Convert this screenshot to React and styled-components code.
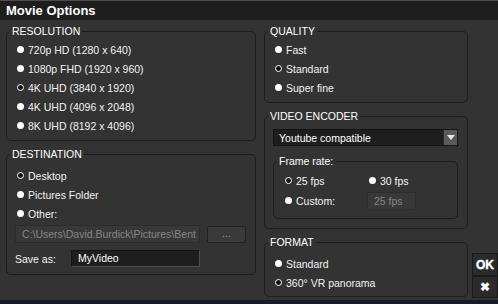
import React from "react";
import styled, { createGlobalStyle, css } from "styled-components";

const GlobalStyle = createGlobalStyle`
  html, body { margin: 0; padding: 0; background: #333333; }
  * { box-sizing: border-box; }
  body {
    font-family: "Liberation Sans", Arial, sans-serif;
    font-size: 10.5px;
    color: #f2f2f2;
  }
`;

const Window = styled.div`
  width: 498px;
  height: 304px;
  background: #333333;
  display: flex;
  flex-direction: column;
  overflow: hidden;
`;

const TitleBar = styled.div`
  height: 20px;
  flex: none;
  background: #1e1e1e;
  border-top: 1px solid #4d4d4d;
  padding-left: 6px;
  font-size: 13px;
  font-weight: bold;
  line-height: 19px;
  color: #ffffff;
`;

const Body = styled.div`
  flex: 1;
  display: flex;
  padding: 5px 0 0 6px;
`;

const BottomStrip = styled.div`
  height: 4px;
  flex: none;
  background: #151c2a;
`;

const Column = styled.div`
  width: ${({ $w }) => $w}px;
  flex: none;
  display: flex;
  flex-direction: column;
  gap: ${({ $gap }) => $gap}px;
  margin-left: ${({ $ml }) => $ml || 0}px;
`;

const SideBar = styled.div`
  flex: 1;
  display: flex;
  flex-direction: column;
  justify-content: flex-end;
  padding: 0 0 2px 4px;
`;

const Group = styled.fieldset`
  margin: 0;
  padding: 0;
  min-width: 0;
  border: 1px solid #1d1d1d;
  border-radius: 5px;
`;

const Legend = styled.legend`
  margin-left: 3px;
  padding: 0 2px;
  font-size: 10.5px;
  line-height: 12px;
  color: #ffffff;
`;

const Content = styled.div`
  display: flex;
  flex-direction: column;
  padding: ${({ $pad }) => $pad};
`;

const RadioRow = styled.label`
  display: flex;
  align-items: center;
  gap: 4px;
  height: ${({ $h }) => $h || 19}px;
  padding-left: ${({ $pl }) => ($pl === undefined ? 2 : $pl)}px;
  width: ${({ $w }) => ($w ? `${$w}px` : "auto")};
  white-space: nowrap;
`;

const Dot = styled.span`
  width: 7px;
  height: 7px;
  flex: none;
  border-radius: 50%;
  background: #ffffff;
  ${({ $on }) =>
    $on &&
    css`
      background: #111111;
      border: 1px solid #ffffff;
    `}
`;

const Line = styled.div`
  display: flex;
  align-items: center;
  gap: ${({ $gap }) => $gap || 0}px;
  margin-top: ${({ $mt }) => $mt || 0}px;
`;

const TextField = styled.div`
  width: ${({ $w }) => $w}px;
  height: ${({ $h }) => $h || 17}px;
  flex: none;
  overflow: hidden;
  white-space: nowrap;
  padding-left: 6px;
  line-height: ${({ $h }) => ($h || 17) - 2}px;
  ${({ $disabled }) =>
    $disabled
      ? css`
          background: #383838;
          border: 1px solid #2c2c2c;
          color: #858585;
        `
      : css`
          background: #1e1e1e;
          border: 1px solid #141414;
          border-right-color: #505050;
          border-bottom-color: #505050;
          color: #ffffff;
        `}
`;

const SmallButton = styled.div`
  width: 39px;
  height: 17px;
  background: #3a3a3a;
  border: 1px solid #222222;
  border-radius: 2px;
  color: #9a9a9a;
  text-align: center;
  line-height: 13px;
`;

const FieldLabel = styled.span`
  width: 56px;
  flex: none;
`;

const Select = styled.div`
  height: 17px;
  display: flex;
  align-items: center;
  background: #1e1e1e;
  border: 1px solid #141414;
  padding-left: 5px;
  color: #ffffff;
`;

const SelectText = styled.span`
  flex: 1;
`;

const SelectArrow = styled.span`
  width: 14px;
  height: 15px;
  background: #5a5a5a;
  border-left: 1px solid #2a2a2a;
  display: flex;
  align-items: center;
  justify-content: center;
`;

const SideButton = styled.div`
  height: ${({ $h }) => $h}px;
  background: #2b2b2b;
  border: 1px solid #1a1a1a;
  display: flex;
  align-items: center;
  justify-content: center;
  color: #ffffff;
  font-weight: bold;
  font-size: ${({ $fs }) => $fs}px;
  font-family: ${({ $font }) => $font};
  -webkit-text-stroke: 0.4px #ffffff;
`;

const Radio = ({ on, children, ...rest }) => (
  <RadioRow {...rest}>
    <Dot $on={on} />
    {children}
  </RadioRow>
);

const resolutions = [
  "720p HD (1280 x 640)",
  "1080p FHD (1920 x 960)",
  "4K UHD (3840 x 1920)",
  "4K UHD (4096 x 2048)",
  "8K UHD (8192 x 4096)",
];

export default function App() {
  return (
    <>
      <GlobalStyle />
      <Window>
        <TitleBar>Movie Options</TitleBar>
        <Body>
          <Column $w={250} $gap={7}>
            <Group>
              <Legend>RESOLUTION</Legend>
              <Content $pad="3px 0 5px 8px">
                {resolutions.map((r, i) => (
                  <Radio key={r} on={i === 2}>
                    {r}
                  </Radio>
                ))}
              </Content>
            </Group>
            <Group>
              <Legend>DESTINATION</Legend>
              <Content $pad="6px 0 7px 8px">
                <Radio on>Desktop</Radio>
                <Radio>Pictures Folder</Radio>
                <Radio>Other:</Radio>
                <Line $gap={7} $mt={2}>
                  <TextField $w={185} $h={18} $disabled>
                    C:\Users\David.Burdick\Pictures\Bent
                  </TextField>
                  <SmallButton>...</SmallButton>
                </Line>
                <Line $mt={7}>
                  <FieldLabel>Save as:</FieldLabel>
                  <TextField $w={129}>MyVideo</TextField>
                </Line>
              </Content>
            </Group>
          </Column>
          <Column $w={204} $gap={7} $ml={8}>
            <Group>
              <Legend>QUALITY</Legend>
              <Content $pad="3px 0 5px 8px">
                <Radio>Fast</Radio>
                <Radio on>Standard</Radio>
                <Radio>Super fine</Radio>
              </Content>
            </Group>
            <Group>
              <Legend>VIDEO ENCODER</Legend>
              <Content $pad="7px 9px 9px 8px">
                <Select>
                  <SelectText>Youtube compatible</SelectText>
                  <SelectArrow>
                    <svg width="8" height="5" viewBox="0 0 8 5">
                      <path d="M0 0 H8 L4 5 Z" fill="#e8e8e8" />
                    </svg>
                  </SelectArrow>
                </Select>
                <Line $mt={9}>
                  <Group style={{ flex: 1 }}>
                    <Legend>Frame rate:</Legend>
                    <Content $pad="4px 0 7px 9px">
                      <Line>
                        <Radio on $pl={2} $w={86}>
                          25 fps
                        </Radio>
                        <Radio $pl={0}>30 fps</Radio>
                      </Line>
                      <Line>
                        <Radio $pl={2} $w={84} $h={21}>
                          Custom:
                        </Radio>
                        <TextField $w={49} $h={18} $disabled>
                          25 fps
                        </TextField>
                      </Line>
                    </Content>
                  </Group>
                </Line>
              </Content>
            </Group>
            <Group>
              <Legend>FORMAT</Legend>
              <Content $pad="6px 0 4px 8px">
                <Radio>Standard</Radio>
                <Radio on>360° VR panorama</Radio>
              </Content>
            </Group>
          </Column>
          <SideBar>
            <SideButton $h={23} $fs={12} $font={'"Liberation Sans", Arial, sans-serif'}>
              OK
            </SideButton>
            <SideButton $h={22} $fs={12} $font={'"DejaVu Sans", sans-serif'}>
              ✖
            </SideButton>
          </SideBar>
        </Body>
        <BottomStrip />
      </Window>
    </>
  );
}
